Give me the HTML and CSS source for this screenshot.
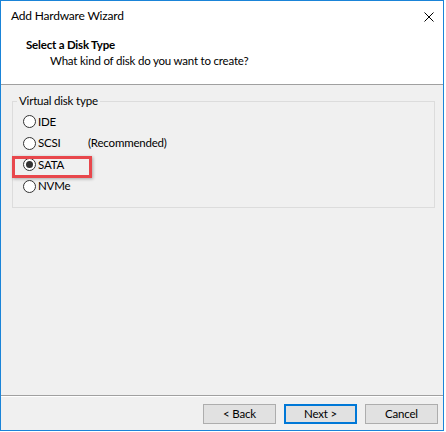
FILE: index.html
```html
<!DOCTYPE html>
<html>
<head>
<meta charset="utf-8">
<link rel="stylesheet" href="styles.css">
</head>
<body>
<div class="window">
  <div class="header">
    <div class="titlebar">
      <span class="title">Add Hardware Wizard</span>
      <svg class="close" width="10" height="10" viewBox="0 0 10 10"><path d="M0.5 0.5 L9.5 9.5 M9.5 0.5 L0.5 9.5" stroke="#000" stroke-width="1" fill="none"/></svg>
    </div>
    <div class="heading">
      <div class="h-title">Select a Disk Type</div>
      <div class="h-sub">What kind of disk do you want to create?</div>
    </div>
  </div>
  <div class="body">
    <fieldset class="group">
      <legend class="legend">Virtual disk type</legend>
      <div class="option"><span class="radio"></span><span class="name">IDE</span></div>
      <div class="option"><span class="radio"></span><span class="name">SCSI</span><span class="note">(Recommended)</span></div>
      <div class="option selected"><span class="radio"></span><span class="name">SATA</span><span class="highlight"></span></div>
      <div class="option"><span class="radio"></span><span class="name">NVMe</span></div>
    </fieldset>
  </div>
  <div class="footer">
    <button class="btn">&lt; Back</button>
    <button class="btn default">Next &gt;</button>
    <button class="btn">Cancel</button>
  </div>
</div>
</body>
</html>
```

FILE: styles.css
```css
* { box-sizing: border-box; }
html, body {
  margin: 0;
  padding: 0;
  background: #ffffff;
}
body {
  font-family: "Lato", "Noto Sans", sans-serif;
  font-size: 11.5px;
  letter-spacing: -0.2px;
  color: #000;
}
.window {
  width: 444px;
  height: 431px;
  border: 1px solid #1a84d8;
  background: #f0f0f0;
  display: flex;
  flex-direction: column;
}
.header {
  height: 84px;
  background: #ffffff;
  border-bottom: 1px solid #a0a0a0;
  flex: none;
}
.titlebar {
  height: 30px;
  display: flex;
  align-items: flex-start;
  justify-content: space-between;
  padding: 7px 9px 0 10px;
}
.title {
  line-height: 16px;
  font-size: 12px;
}
.close {
  margin-top: 4px;
}
.heading {
  padding: 6px 0 0 25px;
}
.h-title {
  font-weight: bold;
  line-height: 16px;
}
.h-sub {
  line-height: 16px;
  padding-left: 24px;
}
.body {
  flex: 1;
  padding: 8px 8px 0 11px;
}
.group {
  margin: 0;
  min-width: 0;
  border: 1px solid #dcdcdc;
  padding: 2px 0 10px 10px;
}
.legend {
  line-height: 16px;
  padding: 0 2px;
  margin-left: -6px;
}
.option {
  position: relative;
  height: 21.5px;
  display: flex;
  align-items: center;
  line-height: 16px;
}
.radio {
  width: 13px;
  height: 13px;
  border: 1px solid #333333;
  border-radius: 50%;
  background: #ffffff;
  margin-right: 2px;
  display: flex;
  align-items: center;
  justify-content: center;
  flex: none;
}
.selected .radio::after {
  content: "";
  width: 7px;
  height: 7px;
  border-radius: 50%;
  background: #333333;
}
.name {
  width: 50px;
}
.highlight {
  position: absolute;
  left: -11px;
  top: 2px;
  width: 80px;
  height: 22px;
  border: 3px solid #e8474c;
  box-shadow: 1px 1px 3px rgba(0, 0, 0, 0.3);
}
.footer {
  flex: none;
  height: 35px;
  border-top: 1px solid #a0a0a0;
  box-shadow: inset 0 1px 0 #ffffff;
  display: flex;
  justify-content: flex-end;
  gap: 8px;
  padding: 8px 5px 0 0;
}
.btn {
  width: 73px;
  height: 20px;
  background: #e1e1e1;
  border: 1px solid #adadad;
  font-family: inherit;
  font-size: 11.5px;
  letter-spacing: -0.2px;
  line-height: 16px;
  padding: 0;
  margin: 0;
  color: #000;
}
.btn.default {
  border: 2px solid #0078d7;
}
```
